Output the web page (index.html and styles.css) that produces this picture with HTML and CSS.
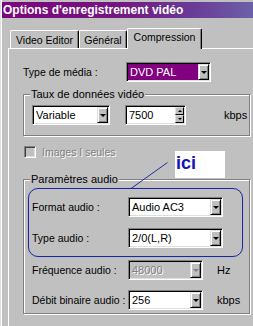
FILE: index.html
```html
<!DOCTYPE html>
<html lang="fr">
<head>
    <meta charset="UTF-8">
    <title>Options d'enregistrement vidéo</title>
    <link rel="stylesheet" href="styles.css">
</head>
<body>

    <div class="window">
        <div class="titlebar">Options d'enregistrement vidéo</div>

        <!-- onglets -->
        <div class="tabs">
            <div class="tab tab-video">Video Editor</div>
            <div class="tab tab-general">Général</div>
            <div class="tab tab-compression selected">Compression</div>
        </div>

        <div class="panel">
            <div class="row row-media">
                <span class="label label-media">Type de média :</span>
                <div class="combo combo-media"><span class="value highlight">DVD PAL</span><span class="drop"></span></div>
            </div>

            <!-- débit vidéo -->
            <div class="group">
                <span class="legend">Taux de données vidéo</span>
                <div class="row row-rate">
                    <div class="combo combo-mode"><span class="value">Variable</span><span class="drop"></span></div>
                    <div class="combo spin"><span class="value">7500</span><span class="spin-btns"><span class="up"></span><span class="down"></span></span></div>
                    <span class="unit unit-rate">kbps</span>
                </div>
            </div>

            <div class="check disabled"><span class="box"></span><span class="check-label">Images I seules</span></div>

            <!-- audio -->
            <div class="group group-audio">
                <span class="legend">Paramètres audio</span>
                <div class="frame">
                    <div class="row">
                        <span class="label">Format audio :</span>
                        <div class="combo combo-wide"><span class="value">Audio AC3</span><span class="drop"></span></div>
                    </div>
                    <div class="row row-second">
                        <span class="label">Type audio :</span>
                        <div class="combo combo-wide"><span class="value">2/0(L,R)</span><span class="drop"></span></div>
                    </div>
                </div>
                <div class="row row-freq">
                    <span class="label">Fréquence audio :</span>
                    <div class="combo combo-small disabled"><span class="value">48000</span><span class="drop"></span></div>
                    <span class="unit">Hz</span>
                </div>
                <div class="row row-bitrate">
                    <span class="label">Débit binaire audio :</span>
                    <div class="combo combo-small"><span class="value">256</span><span class="drop"></span></div>
                    <span class="unit">kbps</span>
                </div>
            </div>
        </div>
    </div>

    <!-- annotation -->
    <svg class="pointer" width="253" height="326" viewBox="0 0 253 326">
        <line x1="131" y1="188.5" x2="167.5" y2="162.5" stroke="#1f2f9f" stroke-width="1"/>
    </svg>
    <div class="ici">ici</div>

</body>
</html>
```

FILE: styles.css
```css
body {
    margin: 0;
    width: 253px;
    height: 326px;
    overflow: hidden;
    position: relative;
    background-color: #c0c0c0;
    font-family: "Liberation Sans", Arial, sans-serif;
    font-size: 10.5px;
    color: #000;
}

.window {
    height: 326px;
    padding-top: 2px;
    box-sizing: border-box;
    border-left: 1px solid #dfdfdf;
    box-shadow: inset 1px 0 #fff;
}

.titlebar {
    height: 16px;
    margin-left: 1px;
    padding-left: 1px;
    line-height: 16px;
    font-size: 12px;
    font-weight: bold;
    color: #fff;
    white-space: nowrap;
    background: linear-gradient(90deg, #7c067c 0%, #74157f 45%, #6a3a96 75%, #6c60a8 100%);
}

/* onglets */
.tabs {
    display: flex;
    align-items: flex-end;
    height: 30px;
    padding-left: 9px;
}

.tab {
    height: 18px;
    box-sizing: border-box;
    border-top: 1px solid #fff;
    border-left: 1px solid #fff;
    border-right: 1px solid #000;
    border-radius: 2px 2px 0 0;
    box-shadow: inset -1px 0 #808080;
    line-height: 18px;
    text-align: center;
    white-space: nowrap;
}

.tab-video {
    width: 69px;
}

.tab-general {
    width: 48px;
}

.tab-compression {
    width: 75px;
}

.tab.selected {
    height: 21px;
    margin-bottom: -1px;
    line-height: 17px;
    background-color: #c0c0c0;
    position: relative;
    z-index: 1;
}

.panel {
    margin-left: 7px;
    padding-left: 14px;
    border-top: 1px solid #fff;
    border-left: 1px solid #fff;
    height: 280px;
}

.row {
    display: flex;
    align-items: center;
    height: 20px;
}

.row-media {
    margin-top: 13px;
}

.label {
    width: 96px;
    white-space: nowrap;
}

.label-media {
    width: 103px;
}

/* listes déroulantes */
.combo {
    display: flex;
    height: 20px;
    box-sizing: border-box;
    padding: 1px;
    border: 1px solid;
    border-color: #808080 #fff #fff #808080;
    box-shadow: inset 1px 1px #000, inset -1px -1px #dfdfdf;
    background-color: #fff;
}

.combo .value {
    flex: 1;
    padding-left: 2px;
    line-height: 16px;
    font-size: 11px;
    white-space: nowrap;
}

.combo .value.highlight {
    background-color: #800080;
    color: #fff;
}

.drop {
    width: 11px;
    box-sizing: border-box;
    display: flex;
    align-items: center;
    justify-content: center;
    border: 1px solid;
    border-color: #dfdfdf #000 #000 #dfdfdf;
    box-shadow: inset 1px 1px #fff, inset -1px -1px #808080;
    background-color: #c0c0c0;
}

.drop::after {
    content: "";
    border: solid transparent;
    border-width: 3px 3px 0;
    border-top-color: #000;
}

.combo-media {
    width: 85px;
}

.combo-mode {
    width: 78px;
    margin-right: 15px;
}

.combo-wide {
    width: 95px;
}

.combo-small {
    width: 75px;
}

.combo.disabled {
    background-color: #c0c0c0;
}

.combo.disabled .value {
    color: #808080;
    text-shadow: 1px 1px #fff;
}

.combo.disabled .drop::after {
    border-top-color: #808080;
}

.spin {
    width: 61px;
    margin-right: 24px;
}

.spin-btns {
    width: 9px;
    display: flex;
    flex-direction: column;
}

.spin-btns span {
    flex: 1;
    display: flex;
    align-items: center;
    justify-content: center;
    border: 1px solid;
    border-color: #dfdfdf #000 #000 #dfdfdf;
    background-color: #c0c0c0;
}

.spin-btns .up::after {
    content: "";
    border: solid transparent;
    border-width: 0 2px 2px;
    border-bottom-color: #000;
}

.spin-btns .down::after {
    content: "";
    border: solid transparent;
    border-width: 2px 2px 0;
    border-top-color: #000;
}

.unit {
    margin-left: 14px;
    font-size: 11px;
}

/* cadres */
.group {
    width: 227px;
    box-sizing: border-box;
    margin-top: 12px;
    padding: 0 0 10px 8px;
    border: 1px solid #808080;
    box-shadow: inset 1px 1px #fff, 1px 1px #fff;
}

.legend {
    display: table;
    height: 13px;
    margin: -7px 0 0 -2px;
    padding: 0 1px;
    line-height: 12px;
    font-size: 11px;
    background-color: #c0c0c0;
}

.row-rate {
    margin-top: 4px;
}

.check {
    display: flex;
    align-items: center;
    height: 12px;
    margin: 10px 0 0 1px;
}

.check .box {
    width: 12px;
    height: 12px;
    box-sizing: border-box;
    border: 1px solid;
    border-color: #808080 #fff #fff #808080;
    box-shadow: inset 1px 1px #404040, inset -1px -1px #dfdfdf;
}

.check-label {
    margin-left: 6px;
    color: #808080;
    text-shadow: 1px 1px #fff;
}

.group-audio {
    margin-top: 21px;
    padding-bottom: 3px;
}

.frame {
    width: 215px;
    box-sizing: border-box;
    margin: 2px 0 0 -4px;
    padding: 8px 0 8px 3px;
    border: 1px solid #1a2a9c;
    border-radius: 10px;
    box-shadow: 0 0 1px #6f8fe0;
}

.row-second {
    margin-top: 11px;
}

.row-freq {
    margin-top: 3px;
}

.row-bitrate {
    margin-top: 10px;
}

/* annotation */
.pointer {
    position: absolute;
    left: 0;
    top: 0;
    pointer-events: none;
}

.ici {
    position: absolute;
    left: 175px;
    top: 151px;
    width: 50px;
    height: 27px;
    box-sizing: border-box;
    padding: 3px 0 0 1px;
    background-color: #fff;
    color: #1414b4;
    font-size: 18px;
    font-weight: bold;
    line-height: 18px;
}
```
